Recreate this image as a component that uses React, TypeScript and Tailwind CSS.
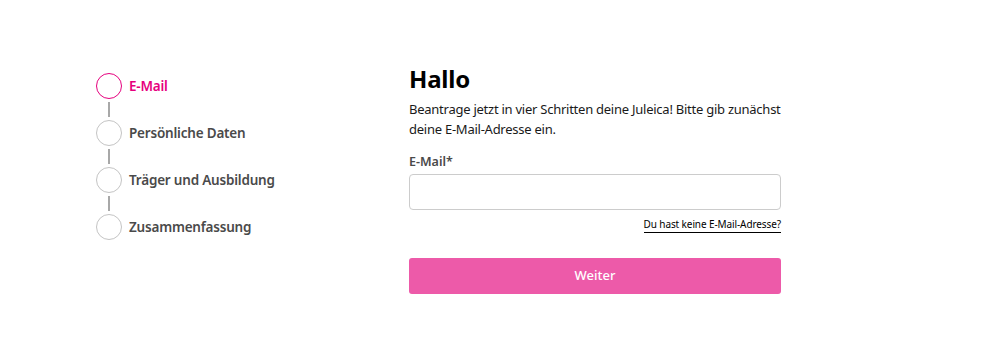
import React from "react"

const steps = ["E-Mail", "Persönliche Daten", "Träger und Ausbildung", "Zusammenfassung"]

function Stepper({ active }: { active: number }) {
  return (
    <ol className="flex flex-col">
      {steps.map((label, i) => (
        <li key={label} className="flex flex-col">
          {i > 0 && <div className="ml-[12px] my-[3px] h-[15px] w-[2px] bg-[#a8a8a8]" />}
          <div className="flex h-[26px] items-center gap-[7px]">
            <span
              className={`h-[26px] w-[26px] rounded-full border-[1.5px] bg-white ${
                i === active ? "border-[#e6007e]" : "border-[#c4c4c4]"
              }`}
            />
            <span
              className={`text-[13.5px] font-semibold tracking-[-0.2px] ${
                i === active ? "text-[#e6007e]" : "text-[#4a4a4a]"
              }`}
            >
              {label}
            </span>
          </div>
        </li>
      ))}
    </ol>
  )
}

export default function App() {
  return (
    <div className="min-h-[338px] bg-white font-['Noto_Sans',sans-serif] text-[#1a1a1a]">
      <div className="flex pl-[96px] pt-[73px]">
        <div className="w-[313px]">
          <Stepper active={0} />
        </div>
        <div className="-mt-[10px] w-[372px]">
          <h1 className="text-[24px] font-bold leading-[32px] tracking-[-0.2px] text-black">Hallo</h1>
          <p className="mt-[4px] text-[13px] leading-[20px] tracking-[-0.25px]">
            Beantrage jetzt in vier Schritten deine Juleica! Bitte gib zunächst
            <br />
            deine E-Mail-Adresse ein.
          </p>
          <label className="mt-[14px] block text-[12.5px] font-semibold leading-[18px] text-[#4a4a4a]">
            E-Mail*
          </label>
          <input
            type="email"
            className="mt-[3px] block h-[36px] w-full rounded-[4px] border border-[#cccccc] px-3 text-[14px] outline-none"
          />
          <div className="mt-[7px] flex justify-end">
            <a href="#" className="border-b border-black text-[10px] leading-[15px] tracking-[-0.1px] text-black">
              Du hast keine E-Mail-Adresse?
            </a>
          </div>
          <button className="mt-[25px] h-[36px] w-full rounded-[3px] bg-[#ed5aa9] text-[13px] font-medium text-white">
            Weiter
          </button>
        </div>
      </div>
    </div>
  )
}
